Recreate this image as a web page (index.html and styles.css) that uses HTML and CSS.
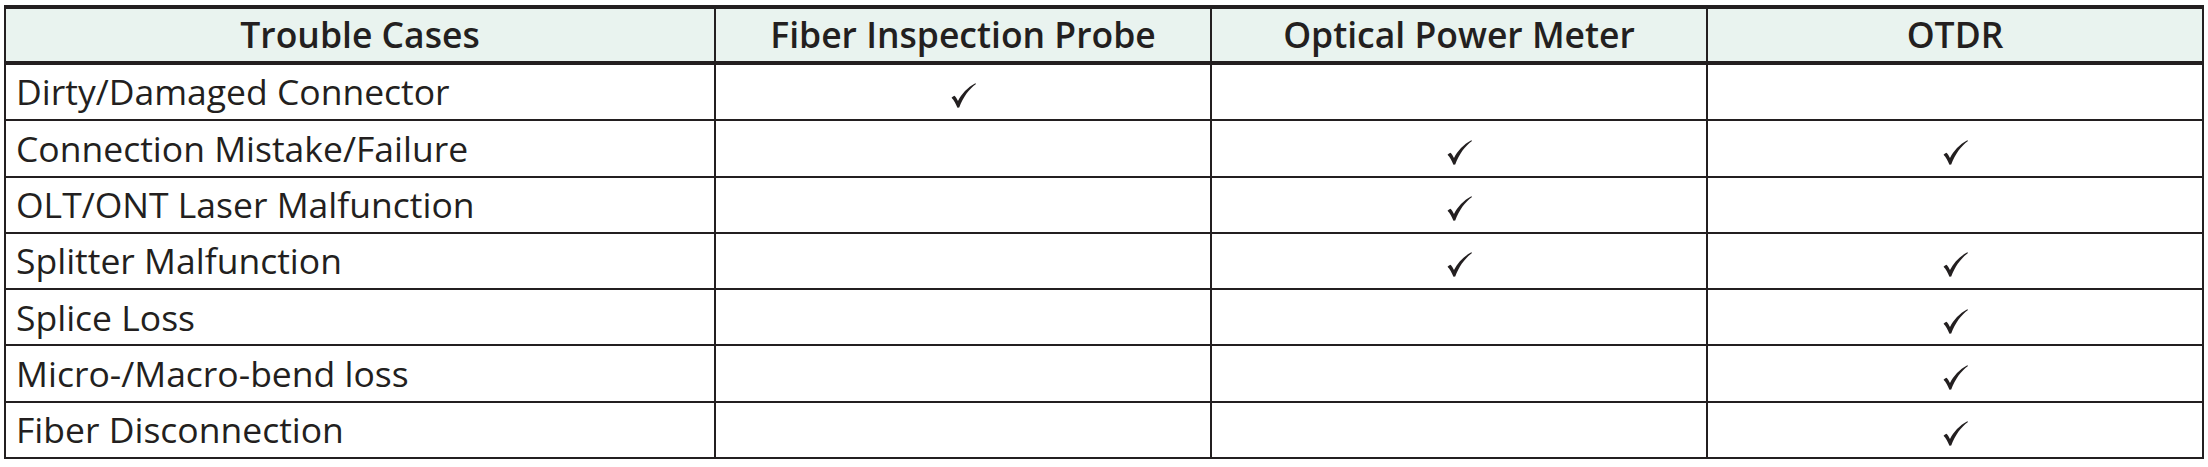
FILE: index.html
```html
<!DOCTYPE html>
<html lang="en">
<head>
<meta charset="utf-8">
<title>Trouble Cases</title>
<link rel="stylesheet" href="styles.css">
</head>
<body>
<table class="matrix">
  <colgroup>
    <col class="c-case">
    <col class="c-tool">
    <col class="c-tool">
    <col class="c-tool">
  </colgroup>
  <thead>
    <tr>
      <th>Trouble Cases</th>
      <th>Fiber Inspection Probe</th>
      <th>Optical Power Meter</th>
      <th>OTDR</th>
    </tr>
  </thead>
  <tbody>
    <tr>
      <td class="case">Dirty/Damaged Connector</td>
      <td class="mark"><svg class="check" viewBox="0 0 24 24"><path d="M0.5 14.2C1.5 13.2 2.4 12.6 3.3 12.3C4.7 13.6 5.7 15.3 6.7 17.2C10.2 10.4 15.6 4.4 23.4 0.2L24 1C17.2 6.1 11.6 13.6 7.9 23.6L6.2 23.7C4.7 20.2 2.9 16.6 0.5 14.2Z"/></svg></td>
      <td class="mark"></td>
      <td class="mark"></td>
    </tr>
    <tr>
      <td class="case">Connection Mistake/Failure</td>
      <td class="mark"></td>
      <td class="mark"><svg class="check" viewBox="0 0 24 24"><path d="M0.5 14.2C1.5 13.2 2.4 12.6 3.3 12.3C4.7 13.6 5.7 15.3 6.7 17.2C10.2 10.4 15.6 4.4 23.4 0.2L24 1C17.2 6.1 11.6 13.6 7.9 23.6L6.2 23.7C4.7 20.2 2.9 16.6 0.5 14.2Z"/></svg></td>
      <td class="mark"><svg class="check" viewBox="0 0 24 24"><path d="M0.5 14.2C1.5 13.2 2.4 12.6 3.3 12.3C4.7 13.6 5.7 15.3 6.7 17.2C10.2 10.4 15.6 4.4 23.4 0.2L24 1C17.2 6.1 11.6 13.6 7.9 23.6L6.2 23.7C4.7 20.2 2.9 16.6 0.5 14.2Z"/></svg></td>
    </tr>
    <tr>
      <td class="case">OLT/ONT Laser Malfunction</td>
      <td class="mark"></td>
      <td class="mark"><svg class="check" viewBox="0 0 24 24"><path d="M0.5 14.2C1.5 13.2 2.4 12.6 3.3 12.3C4.7 13.6 5.7 15.3 6.7 17.2C10.2 10.4 15.6 4.4 23.4 0.2L24 1C17.2 6.1 11.6 13.6 7.9 23.6L6.2 23.7C4.7 20.2 2.9 16.6 0.5 14.2Z"/></svg></td>
      <td class="mark"></td>
    </tr>
    <tr>
      <td class="case">Splitter Malfunction</td>
      <td class="mark"></td>
      <td class="mark"><svg class="check" viewBox="0 0 24 24"><path d="M0.5 14.2C1.5 13.2 2.4 12.6 3.3 12.3C4.7 13.6 5.7 15.3 6.7 17.2C10.2 10.4 15.6 4.4 23.4 0.2L24 1C17.2 6.1 11.6 13.6 7.9 23.6L6.2 23.7C4.7 20.2 2.9 16.6 0.5 14.2Z"/></svg></td>
      <td class="mark"><svg class="check" viewBox="0 0 24 24"><path d="M0.5 14.2C1.5 13.2 2.4 12.6 3.3 12.3C4.7 13.6 5.7 15.3 6.7 17.2C10.2 10.4 15.6 4.4 23.4 0.2L24 1C17.2 6.1 11.6 13.6 7.9 23.6L6.2 23.7C4.7 20.2 2.9 16.6 0.5 14.2Z"/></svg></td>
    </tr>
    <tr>
      <td class="case">Splice Loss</td>
      <td class="mark"></td>
      <td class="mark"></td>
      <td class="mark"><svg class="check" viewBox="0 0 24 24"><path d="M0.5 14.2C1.5 13.2 2.4 12.6 3.3 12.3C4.7 13.6 5.7 15.3 6.7 17.2C10.2 10.4 15.6 4.4 23.4 0.2L24 1C17.2 6.1 11.6 13.6 7.9 23.6L6.2 23.7C4.7 20.2 2.9 16.6 0.5 14.2Z"/></svg></td>
    </tr>
    <tr>
      <td class="case">Micro-/Macro-bend loss</td>
      <td class="mark"></td>
      <td class="mark"></td>
      <td class="mark"><svg class="check" viewBox="0 0 24 24"><path d="M0.5 14.2C1.5 13.2 2.4 12.6 3.3 12.3C4.7 13.6 5.7 15.3 6.7 17.2C10.2 10.4 15.6 4.4 23.4 0.2L24 1C17.2 6.1 11.6 13.6 7.9 23.6L6.2 23.7C4.7 20.2 2.9 16.6 0.5 14.2Z"/></svg></td>
    </tr>
    <tr>
      <td class="case">Fiber Disconnection</td>
      <td class="mark"></td>
      <td class="mark"></td>
      <td class="mark"><svg class="check" viewBox="0 0 24 24"><path d="M0.5 14.2C1.5 13.2 2.4 12.6 3.3 12.3C4.7 13.6 5.7 15.3 6.7 17.2C10.2 10.4 15.6 4.4 23.4 0.2L24 1C17.2 6.1 11.6 13.6 7.9 23.6L6.2 23.7C4.7 20.2 2.9 16.6 0.5 14.2Z"/></svg></td>
    </tr>
  </tbody>
</table>
</body>
</html>
```

FILE: styles.css
```css
html, body {
  margin: 0;
  padding: 0;
  background: #ffffff;
}

body {
  padding: 5px 0 0 4px;
  font-family: "Open Sans", "Noto Sans", "Liberation Sans", sans-serif;
  color: #231f20;
}

.matrix {
  border-collapse: collapse;
  table-layout: fixed;
  width: 2199px;
  border-top: 4px solid #231f20;
  border-left: 2px solid #231f20;
  border-right: 2px solid #231f20;
  border-bottom: 2px solid #231f20;
}

.c-case { width: 710px; }
.c-tool { width: 496px; }

.matrix th,
.matrix td {
  border: 2px solid #231f20;
  padding: 0;
}

.matrix th {
  background: #e9f3ef;
  height: 52px;
  font-size: 35.5px;
  font-weight: 600;
  text-align: center;
  line-height: 1;
  border-top-width: 4px;
  border-bottom-width: 4px;
}

.matrix td {
  height: 54.3px;
  font-size: 35.5px;
  line-height: 1;
}

.matrix td.case {
  text-align: left;
  padding-left: 10px;
}

.matrix td.mark {
  text-align: center;
}

.check {
  display: inline-block;
  width: 25px;
  height: 25px;
  fill: #231f20;
  vertical-align: middle;
}
```
